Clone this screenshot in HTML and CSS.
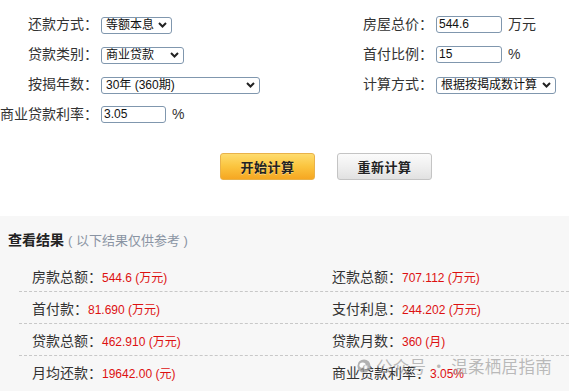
FILE: index.html
```html
<!DOCTYPE html>
<html lang="zh-CN">
<head>
<meta charset="utf-8">
<title>房贷计算器</title>
<link rel="stylesheet" href="styles.css">
</head>
<body>
<div class="calc">
  <div class="form">
    <div class="col col-left">
      <div class="row">
        <label class="lbl">还款方式：</label>
        <span class="sel w71"><select><option>等额本息</option></select><svg class="chev" viewBox="0 0 9 6"><path d="M1 1 L4.5 4.5 L8 1"/></svg></span>
      </div>
      <div class="row">
        <label class="lbl">贷款类别：</label>
        <span class="sel w83"><select><option>商业贷款</option></select><svg class="chev" viewBox="0 0 9 6"><path d="M1 1 L4.5 4.5 L8 1"/></svg></span>
      </div>
      <div class="row">
        <label class="lbl">按揭年数：</label>
        <span class="sel w159"><select><option>30年 (360期)</option></select><svg class="chev" viewBox="0 0 9 6"><path d="M1 1 L4.5 4.5 L8 1"/></svg></span>
      </div>
      <div class="row">
        <label class="lbl">商业贷款利率：</label>
        <input class="inp w65" type="text" value="3.05"><span class="unit">%</span>
      </div>
    </div>
    <div class="col col-right">
      <div class="row">
        <label class="lbl">房屋总价：</label>
        <input class="inp w66" type="text" value="544.6"><span class="unit">万元</span>
      </div>
      <div class="row">
        <label class="lbl">首付比例：</label>
        <input class="inp w66" type="text" value="15"><span class="unit">%</span>
      </div>
      <div class="row">
        <label class="lbl">计算方式：</label>
        <span class="sel w120"><select><option>根据按揭成数计算</option></select><svg class="chev" viewBox="0 0 9 6"><path d="M1 1 L4.5 4.5 L8 1"/></svg></span>
      </div>
    </div>
  </div>
  <div class="actions">
    <button class="btn btn-primary" type="button">开始计算</button>
    <button class="btn btn-reset" type="button">重新计算</button>
  </div>
</div>

<section class="result">
  <h3 class="result-title">查看结果<span class="note">( 以下结果仅供参考 )</span></h3>
  <ul class="result-list">
    <li class="result-row">
      <div class="cell"><span class="k">房款总额：</span><span class="v">544.6 (万元)</span></div>
      <div class="cell"><span class="k">还款总额：</span><span class="v">707.112 (万元)</span></div>
    </li>
    <li class="result-row">
      <div class="cell"><span class="k">首付款：</span><span class="v">81.690 (万元)</span></div>
      <div class="cell"><span class="k">支付利息：</span><span class="v">244.202 (万元)</span></div>
    </li>
    <li class="result-row">
      <div class="cell"><span class="k">贷款总额：</span><span class="v">462.910 (万元)</span></div>
      <div class="cell"><span class="k">贷款月数：</span><span class="v">360 (月)</span></div>
    </li>
    <li class="result-row">
      <div class="cell"><span class="k">月均还款：</span><span class="v">19642.00 (元)</span></div>
      <div class="cell"><span class="k">商业贷款利率：</span><span class="v">3.05%</span></div>
    </li>
  </ul>
  <div class="watermark">
    <svg class="wm-icon" viewBox="0 0 16 16"><circle cx="8" cy="8" r="7.5" fill="#9a9a9a"/><ellipse cx="6.4" cy="7" rx="3.6" ry="3" fill="#fff"/><ellipse cx="10" cy="9.4" rx="3" ry="2.5" fill="#fff" stroke="#9a9a9a" stroke-width="0.8"/></svg>
    <span class="wm-text">公众号 · 温柔栖居指南</span>
  </div>
</section>
</body>
</html>
```

FILE: styles.css
```css
* { box-sizing: border-box; }

html, body {
  margin: 0;
  padding: 0;
  background: #fff;
  overflow: hidden;
}

body {
  font-family: "Liberation Sans", "Noto Sans CJK SC", sans-serif;
  color: #333;
  font-size: 14px;
}

.calc { padding-top: 9px; }

.form { display: flex; }
.col-left { width: 335px; }
.col-right { flex: 1; }

.row {
  display: flex;
  align-items: center;
  height: 30px;
}

.lbl {
  width: 98px;
  flex: none;
  text-align: right;
  white-space: nowrap;
  font-size: 14px;
  line-height: 17px;
  color: #333;
  margin-right: 3px;
  display: flex;
  justify-content: flex-end;
}

.sel {
  position: relative;
  display: inline-block;
  height: 17px;
}
.sel select {
  -webkit-appearance: none;
  appearance: none;
  width: 100%;
  height: 17px;
  margin: 0;
  border: 1px solid #8097ae;
  border-radius: 3px;
  background: #fff;
  padding: 0 14px 0 4px;
  font-family: "Liberation Sans", "Noto Sans CJK SC", sans-serif;
  font-size: 12px;
  line-height: 15px;
  color: #111;
}
.chev {
  position: absolute;
  right: 5px;
  top: 6px;
  width: 9px;
  height: 6px;
  pointer-events: none;
}
.chev path {
  fill: none;
  stroke: #222;
  stroke-width: 2;
}

.inp {
  height: 17px;
  margin: 0;
  border: 1px solid #8097ae;
  border-radius: 3px;
  padding: 0 2px;
  font-family: "Liberation Sans", "Noto Sans CJK SC", sans-serif;
  font-size: 12px;
  color: #111;
  background: #fff;
}

.w71 { width: 71px; }
.w83 { width: 83px; }
.w159 { width: 159px; }
.w120 { width: 120px; }
.w65 { width: 65px; }
.w66 { width: 66px; }

.unit {
  margin-left: 6px;
  font-size: 14px;
  line-height: 17px;
  color: #333;
}

.actions {
  display: flex;
  gap: 22px;
  padding-left: 220px;
  margin-top: 24px;
}

.btn {
  width: 95px;
  height: 27px;
  border-radius: 3px;
  font-family: "Noto Sans CJK SC", sans-serif;
  font-weight: bold;
  font-size: 13px;
  letter-spacing: 0.5px;
  color: #222;
  padding: 0;
  cursor: pointer;
  text-shadow: 0 1px 0 rgba(255,255,255,0.4);
}
.btn-primary {
  border: 1px solid #e9b24a;
  background: linear-gradient(#fedc6e, #fbc43e 50%, #f6a722);
}
.btn-reset {
  border: 1px solid #c4c4c4;
  background: linear-gradient(#fbfbfb, #eeeeee 55%, #e1e1e1);
}

.result {
  position: relative;
  margin-top: 36px;
  background: #f7f7f7;
  padding: 0 0 4px 8px;
}

.result-title {
  margin: 0;
  padding: 14px 0 9px;
  font-size: 14px;
  line-height: 20px;
  font-weight: bold;
  color: #222;
}
.note {
  font-weight: normal;
  font-size: 13px;
  color: #8a94a3;
  margin-left: 4px;
}

.result-list {
  list-style: none;
  margin: 0 0 0 11px;
  padding: 0;
}
.result-row {
  display: grid;
  grid-template-columns: 300px 1fr;
  height: 32px;
  align-items: center;
  padding-left: 13px;
  border-bottom: 1px dashed #c8c8c8;
}
.result-row:last-child { border-bottom: none; }

.cell {
  white-space: nowrap;
  display: flex;
  align-items: baseline;
}
.k {
  font-size: 14px;
  color: #333;
}
.v {
  font-size: 12px;
  color: #dd1111;
}

.watermark {
  position: absolute;
  left: 357px;
  top: 140px;
  display: flex;
  align-items: center;
  gap: 5px;
  pointer-events: none;
  opacity: 0.75;
}
.wm-icon { width: 14px; height: 14px; }
.wm-text {
  font-family: "Noto Sans CJK SC", sans-serif;
  font-size: 16.5px;
  line-height: 20px;
  color: rgba(150,150,150,0.85);
  letter-spacing: 0.3px;
}
```
